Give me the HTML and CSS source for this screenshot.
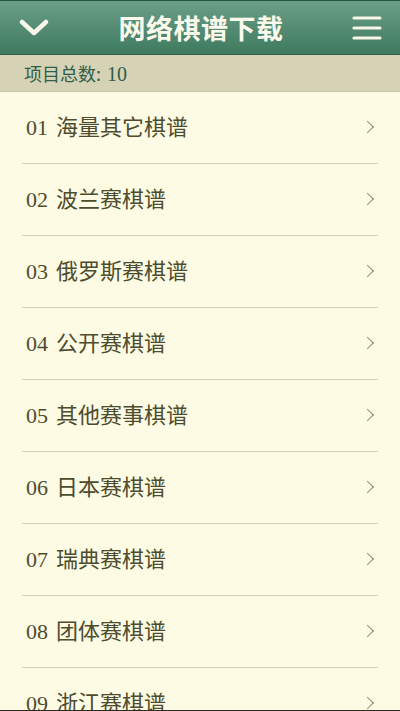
FILE: index.html
```html
<!DOCTYPE html>
<html lang="zh-CN">
<head>
    <meta charset="UTF-8">
    <meta name="viewport" content="width=device-width, initial-scale=1.0">
    <title>网络棋谱下载</title>
    <link rel="stylesheet" href="styles.css">
</head>
<body>
    <div class="screen">
        <div class="topbar">
            <a class="bar-btn" href="#">
                <svg width="32" height="20" viewBox="0 0 32 20"><path d="M4 4 L16 15 L28 4" fill="none" stroke="#f8f6ea" stroke-width="4.5" stroke-linecap="round" stroke-linejoin="round"/></svg>
            </a>
            <h1>网络棋谱下载</h1>
            <a class="bar-btn" href="#">
                <svg width="30" height="26" viewBox="0 0 30 26"><path d="M2 3 H28 M2 13 H28 M2 23 H28" fill="none" stroke="#f8f6ea" stroke-width="3.2" stroke-linecap="round"/></svg>
            </a>
        </div>
        <div class="count"><span>项目总数: <span class="num">10</span></span></div>

        <!-- download categories -->
        <ul class="list">
            <li><span class="label"><span class="num">01</span> 海量其它棋谱</span></li>
            <li><span class="label"><span class="num">02</span> 波兰赛棋谱</span></li>
            <li><span class="label"><span class="num">03</span> 俄罗斯赛棋谱</span></li>
            <li><span class="label"><span class="num">04</span> 公开赛棋谱</span></li>
            <li><span class="label"><span class="num">05</span> 其他赛事棋谱</span></li>
            <li><span class="label"><span class="num">06</span> 日本赛棋谱</span></li>
            <li><span class="label"><span class="num">07</span> 瑞典赛棋谱</span></li>
            <li><span class="label"><span class="num">08</span> 团体赛棋谱</span></li>
            <li><span class="label"><span class="num">09</span> 浙江赛棋谱</span></li>
            <li><span class="label"><span class="num">10</span> 中国赛棋谱</span></li>
        </ul>
    </div>
</body>
</html>
```

FILE: styles.css
```css
body { margin: 0; background-color: #fdfbe3; font-family: "Noto Sans CJK SC", sans-serif; }
.screen { height: 710px; overflow: hidden; border-bottom: 1px solid #2b2b22; }
.num { font-family: "Liberation Serif", "Noto Sans CJK SC", serif; }

.topbar { height: 53px; display: flex; align-items: center; justify-content: space-between; padding: 0 18px; background: linear-gradient(#6b9f87, #3e7a5f); border-top: 1px solid #275441; border-bottom: 1px solid #2f5f49; }
.topbar h1 { margin: 0; font-size: 27px; font-weight: 700; color: #fbf9ec; letter-spacing: 0.5px; }
.bar-btn { display: flex; align-items: center; }

.count { height: 36px; display: flex; align-items: center; padding-left: 24px; background-color: #d5d2b6; color: #2f5e4a; font-size: 18px; border-bottom: 1px solid #c9c6aa; }
.count .num { font-size: 20px; margin-left: 2px; }

.list { list-style: none; margin: 0; padding: 0 22px; }
.list li { height: 72px; box-sizing: border-box; display: flex; align-items: center; padding: 0 0 5px 4px; border-bottom: 1px solid #d3d0b8; color: #4e4c2e; font-size: 22px; position: relative; }
.list li .num { font-size: 22px; margin-right: 3px; }
.list li::after { content: ""; position: absolute; right: 6px; top: 50%; width: 8px; height: 8px; margin-top: -1px; border-top: 1.5px solid #8a8872; border-right: 1.5px solid #8a8872; transform: translateY(-50%) rotate(45deg); }
```
